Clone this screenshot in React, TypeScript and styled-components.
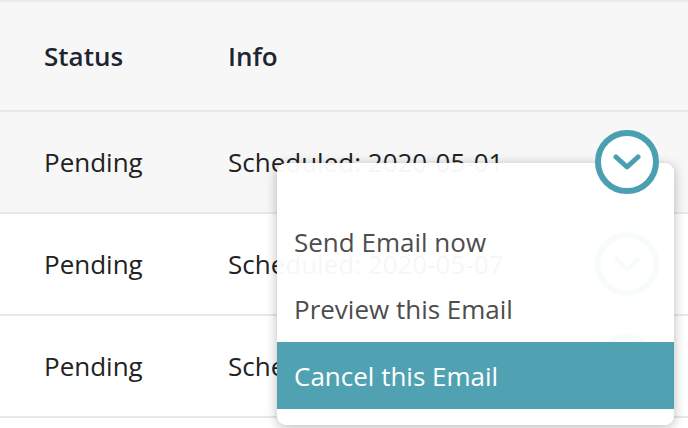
import * as React from "react";
import styled, { createGlobalStyle } from "styled-components";

const GlobalStyle = createGlobalStyle`
  html, body {
    margin: 0;
    padding: 0;
    background: #ffffff;
  }
  body {
    font-family: "Open Sans", "Noto Sans", "Liberation Sans", sans-serif;
    -webkit-font-smoothing: antialiased;
  }
`;

const ACCENT = "#4a9fb1";

interface IEmailRow {
  status: string;
  info: string;
}

const rows: IEmailRow[] = [
  { status: "Pending", info: "Scheduled: 2020-05-01" },
  { status: "Pending", info: "Scheduled: 2020-05-07" },
  { status: "Pending", info: "Scheduled: 2020-05-14" },
];

const menuItems = ["Send Email now", "Preview this Email", "Cancel this Email"];

const Table = styled.div`
  width: 688px;
  height: 428px;
  overflow: hidden;
  display: flex;
  flex-direction: column;
  border-top: 2px solid #e8ebee;
`;

const HeaderRow = styled.div`
  height: 108px;
  flex-shrink: 0;
  display: flex;
  align-items: center;
  padding-left: 44px;
  background: #f7f7f7;
  border-bottom: 2px solid #e6e9ec;
`;

const Row = styled.div<{ $hovered?: boolean }>`
  height: 100px;
  flex-shrink: 0;
  display: flex;
  align-items: center;
  padding: 0 29px 0 44px;
  background: ${props => (props.$hovered ? "#f7f7f7" : "#ffffff")};
  border-bottom: 2px solid #e6e9ec;
`;

const HeadCell = styled.div<{ $width?: number }>`
  width: ${props => (props.$width ? `${props.$width}px` : "auto")};
  font-size: 26px;
  font-weight: 600;
  color: #1d2630;
`;

const Cell = styled.div<{ $width?: number }>`
  width: ${props => (props.$width ? `${props.$width}px` : "auto")};
  font-size: 26px;
  color: #222222;
  white-space: nowrap;
`;

const ActionCell = styled.div`
  margin-left: auto;
  position: relative;
  width: 64px;
  height: 64px;
`;

const CircleButton = styled.button<{ $active?: boolean }>`
  position: relative;
  z-index: ${props => (props.$active ? 2 : "auto")};
  width: 64px;
  height: 64px;
  padding: 0;
  border: 6px solid ${ACCENT};
  border-radius: 50%;
  background: ${props => (props.$active ? "#ffffff" : "transparent")};
  display: flex;
  align-items: center;
  justify-content: center;
  color: ${ACCENT};
  cursor: pointer;
`;

const Menu = styled.div`
  position: absolute;
  z-index: 1;
  top: 33px;
  right: -15px;
  width: 397px;
  padding: 45px 0 16px;
  display: flex;
  flex-direction: column;
  background: rgba(255, 255, 255, 0.96);
  border-radius: 9px;
  box-shadow: 0 2px 12px rgba(0, 0, 0, 0.28);
`;

const MenuItem = styled.div<{ $selected?: boolean }>`
  height: 67px;
  display: flex;
  align-items: center;
  padding-left: 17px;
  font-size: 26px;
  color: ${props => (props.$selected ? "#ffffff" : "#4d4d4d")};
  background: ${props => (props.$selected ? "rgba(74, 159, 177, 0.97)" : "transparent")};
`;

const Chevron: React.FC = () => (
  <svg width="28" height="16" viewBox="0 0 28 16" fill="none">
    <path
      d="M3 3 L14 13 L25 3"
      stroke="currentColor"
      strokeWidth="5"
      strokeLinecap="round"
      strokeLinejoin="round"
    />
  </svg>
);

const App: React.FC = () => {
  return (
    <>
      <GlobalStyle />
      <Table>
        <HeaderRow>
          <HeadCell $width={184}>Status</HeadCell>
          <HeadCell>Info</HeadCell>
        </HeaderRow>
        {rows.map((row, index) => (
          <Row key={index} $hovered={index === 0}>
            <Cell $width={184}>{row.status}</Cell>
            <Cell>{row.info}</Cell>
            <ActionCell>
              <CircleButton $active={index === 0}>
                <Chevron />
              </CircleButton>
              {index === 0 && (
                <Menu>
                  {menuItems.map((item, i) => (
                    <MenuItem key={item} $selected={i === menuItems.length - 1}>
                      {item}
                    </MenuItem>
                  ))}
                </Menu>
              )}
            </ActionCell>
          </Row>
        ))}
      </Table>
    </>
  );
};

export default App;
